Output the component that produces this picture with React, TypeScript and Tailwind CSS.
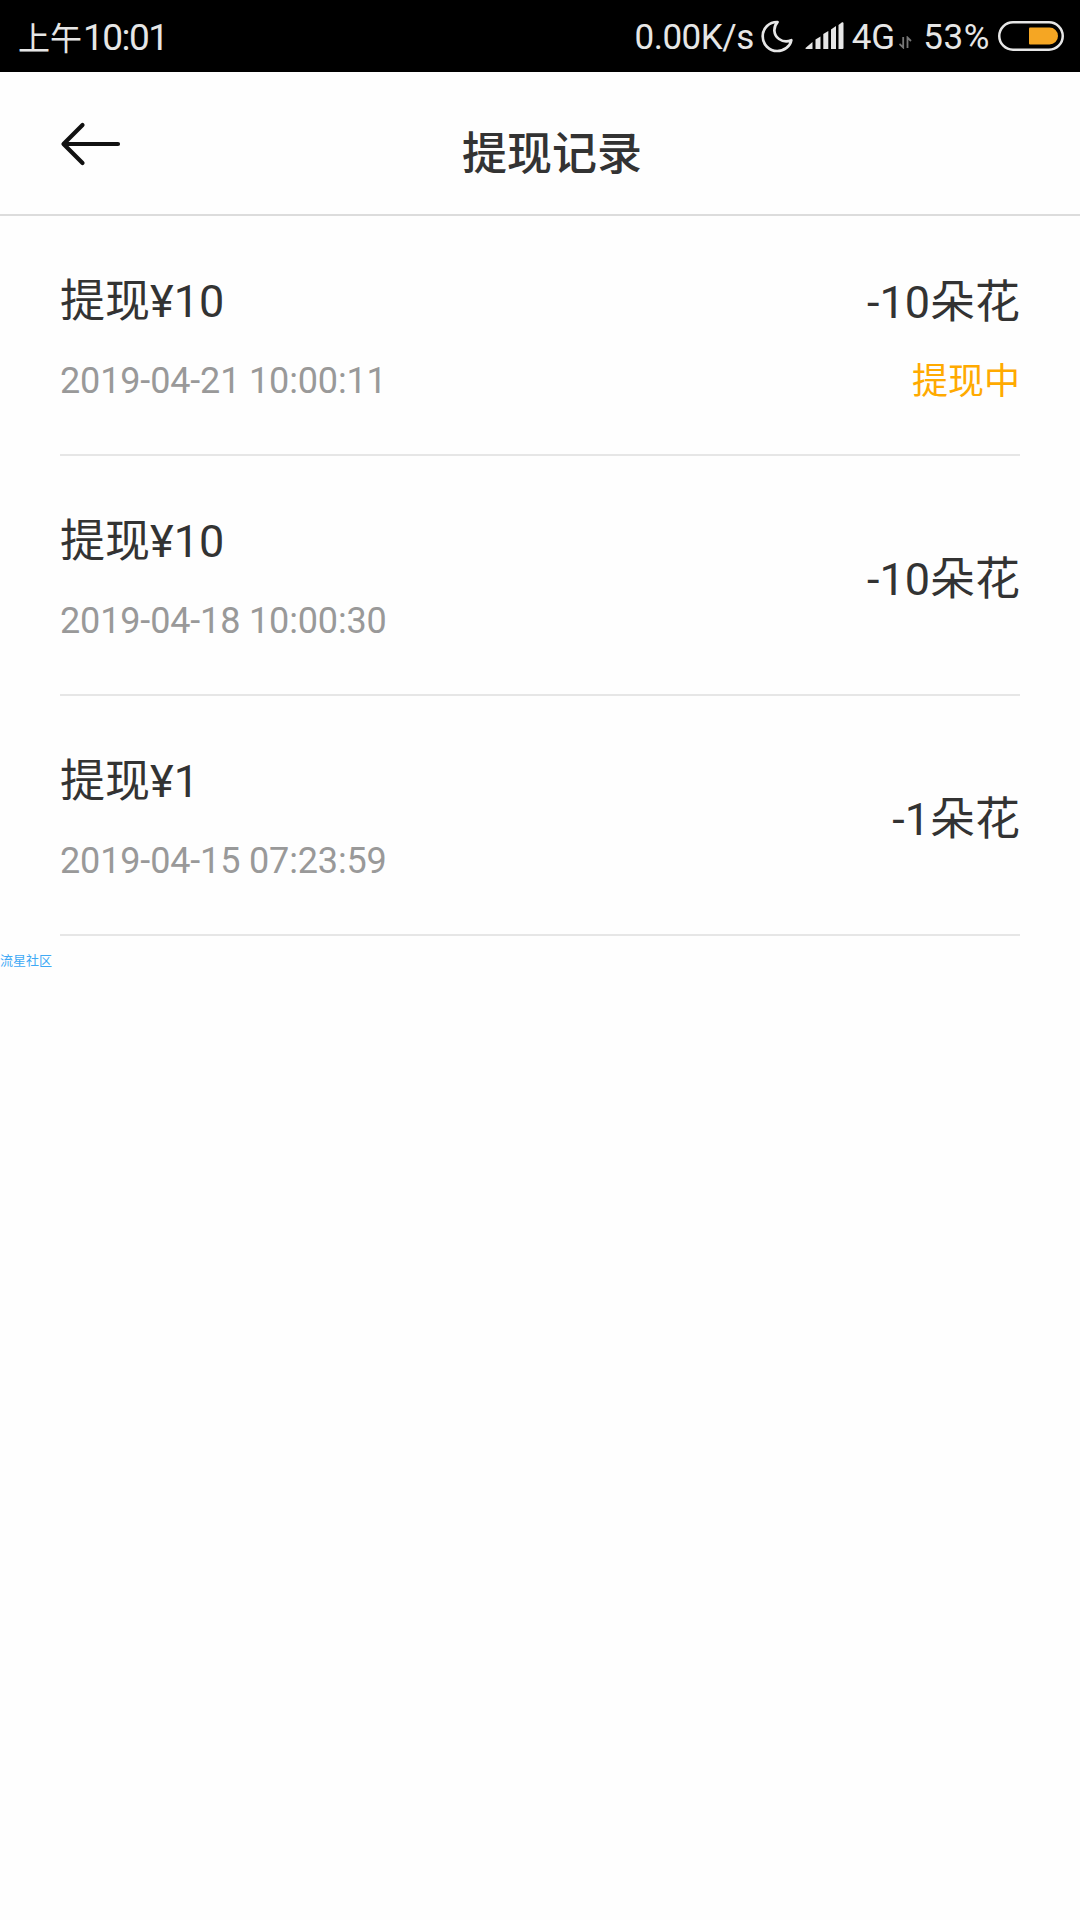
type WithdrawRecord = {
  title: string
  time: string
  amount: string
  status?: string
}

const records: WithdrawRecord[] = [
  {
    title: "提现¥10",
    time: "2019-04-21 10:00:11",
    amount: "-10朵花",
    status: "提现中",
  },
  { title: "提现¥10", time: "2019-04-18 10:00:30", amount: "-10朵花" },
  { title: "提现¥1", time: "2019-04-15 07:23:59", amount: "-1朵花" },
]

const MoonIcon = () => (
  <svg width="32" height="33" viewBox="0 0 32 33" fill="none">
    <path
      d="M16.500 2C8.200 1.800 1.700 8.300 1.700 16.300C1.700 24.500 8.200 31 16.200 31C23.200 31 29.300 26.300 30.300 20.200C26.500 22 22 21.800 18 19C12.500 15 11.800 7.500 16.500 2Z"
      stroke="#e6e6e6"
      strokeWidth="2.700"
      strokeLinejoin="round"
    />
  </svg>
)

const SignalIcon = () => (
  <svg width="39" height="28" viewBox="0 0 39 28" fill="#e6e6e6">
    <path d="M0.500 26L7.500 20V27H1.500Q0 27 0.500 26Z" />
    <path d="M10.500 17.500L15.500 14.500V27H10.500Z" />
    <path d="M18.300 12L23.300 9V27H18.300Z" />
    <path d="M26 7.500L31 4V27H26Z" />
    <path d="M33.500 3L37 .3Q38.500 -.2 38.500 1.500V26Q38.500 27 37.500 27H33.500Z" />
  </svg>
)

const DataArrowsIcon = () => (
  <svg width="13" height="13" viewBox="0 0 13 13" fill="none">
    <path
      d="M.5 8L4.200 11.500V1M8.500 12V1.500L12 5"
      stroke="#777"
      strokeWidth="1.800"
    />
  </svg>
)

const BatteryIcon = () => (
  <svg width="66" height="30" viewBox="0 0 66 30" fill="none">
    <rect
      x="1.250"
      y="1.250"
      width="63.500"
      height="27.500"
      rx="13.750"
      stroke="#e6e6e6"
      strokeWidth="2.500"
    />
    <path
      d="M32 6.500H51.500A8.500 8.500 0 0 1 51.500 23.500H32Q31 23.500 31 22.500V7.500Q31 6.500 32 6.500Z"
      fill="#f5a623"
    />
  </svg>
)

const StatusBar = () => (
  <div className="flex h-[72px] items-center justify-between bg-black pr-4 pl-[18px] leading-none text-[#e6e6e6]">
    <div className="flex items-baseline pt-0.5">
      <span className="text-[32px]">上午</span>
      <span className="ml-px text-[37px] tracking-[-1.500px]">10:01</span>
    </div>
    <div className="flex items-center text-[35px]">
      <span className="pt-0.5 tracking-[-0.500px]">0.00K/s</span>
      <span className="ml-[7px]">
        <MoonIcon />
      </span>
      <span className="ml-3">
        <SignalIcon />
      </span>
      <span className="ml-2 pt-0.5">4G</span>
      <span className="mt-[13px] ml-1">
        <DataArrowsIcon />
      </span>
      <span className="ml-[11px] pt-0.5 tracking-[0.600px]">53%</span>
      <span className="ml-2">
        <BatteryIcon />
      </span>
    </div>
  </div>
)

const Header = () => (
  <header className="grid h-36 grid-cols-[1fr_auto_1fr] items-center border-b-2 border-[#dcdcdc] pr-9 pl-[60px]">
    <button
      type="button"
      aria-label="返回"
      className="justify-self-start pt-0.5"
    >
      <svg width="62" height="44" viewBox="0 0 62 44" fill="none">
        <path
          d="M22.500 3L3.500 22L22.500 41M4 22H58"
          stroke="#111"
          strokeWidth="4.200"
          strokeLinecap="round"
          strokeLinejoin="round"
        />
      </svg>
    </button>
    <h1 className="pt-6 text-[45px] font-medium">提现记录</h1>
  </header>
)

const RecordRow = ({ title, time, amount, status }: WithdrawRecord) => (
  <li className="flex h-60 items-center justify-between border-b-2 border-[#e6e6e6] pt-3">
    <div className="flex flex-col gap-[25px]">
      <span className="text-[45px] leading-[54px]">{title}</span>
      <span className="text-4xl leading-[54px] tracking-[-0.15px] text-[#999]">
        {time}
      </span>
    </div>
    {status ? (
      <div className="flex flex-col items-end gap-[25px] pt-0.5">
        <span className="text-[45px] leading-[54px]">{amount}</span>
        <span className="text-4xl leading-[54px] text-[#ffaa00]">{status}</span>
      </div>
    ) : (
      <span className="pb-[3px] text-[45px] leading-[54px]">{amount}</span>
    )}
  </li>
)

export default function App() {
  return (
    <div className="min-h-screen bg-[#fefefe] font-[Roboto,'Noto_Sans_CJK_SC',sans-serif] text-[#333]">
      <StatusBar />
      <Header />
      <ul className="px-[60px]">
        {records.map((record) => (
          <RecordRow key={record.time} {...record} />
        ))}
      </ul>
      <p className="mt-[18px] text-[13px] leading-none text-[#3fa9f5]">
        流星社区
      </p>
    </div>
  )
}
